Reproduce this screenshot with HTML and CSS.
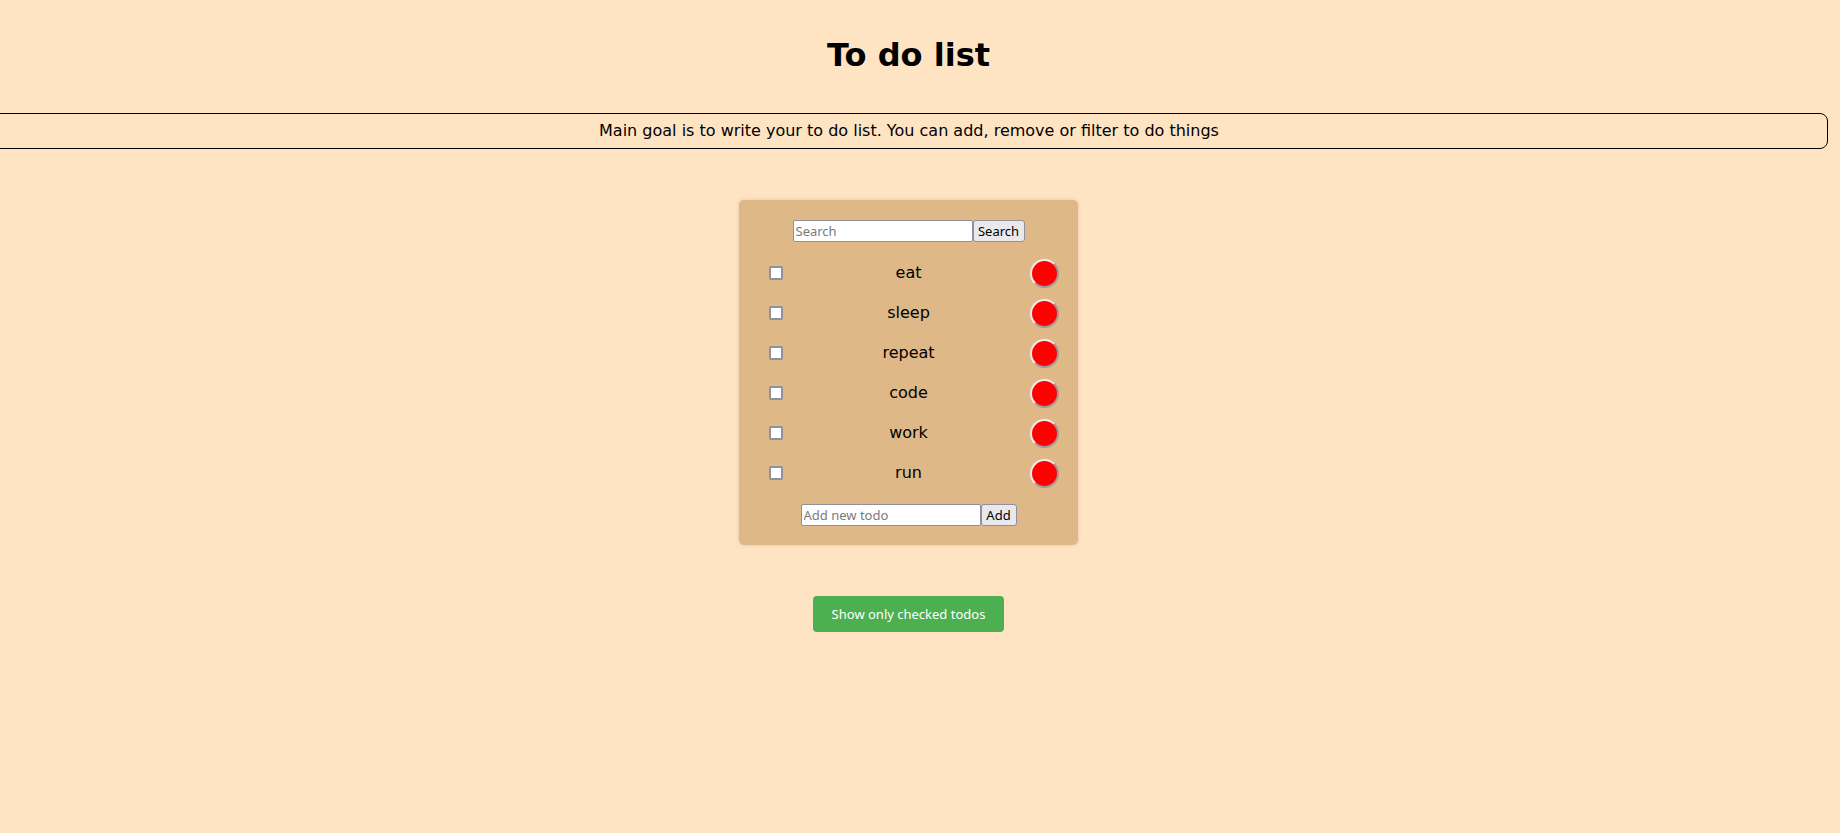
FILE: index.html
```html
<!DOCTYPE html>
<html lang="en">
<head>
<meta charset="utf-8">
<title>To do list</title>
<link rel="stylesheet" href="styles.css">
</head>
<body>
<div class="page">
  <h1 class="title">To do list</h1>
  <p class="intro">Main goal is to write your to do list. You can add, remove or filter to do things</p>
  <div class="card">
    <div class="form-row">
      <input class="field" type="text" placeholder="Search"><button class="small-btn search-btn">Search</button>
    </div>
    <ul class="todo-list">
      <li class="todo"><input class="check" type="checkbox"><span class="todo-text">eat</span><button class="remove" aria-label="remove"></button></li>
      <li class="todo"><input class="check" type="checkbox"><span class="todo-text">sleep</span><button class="remove" aria-label="remove"></button></li>
      <li class="todo"><input class="check" type="checkbox"><span class="todo-text">repeat</span><button class="remove" aria-label="remove"></button></li>
      <li class="todo"><input class="check" type="checkbox"><span class="todo-text">code</span><button class="remove" aria-label="remove"></button></li>
      <li class="todo"><input class="check" type="checkbox"><span class="todo-text">work</span><button class="remove" aria-label="remove"></button></li>
      <li class="todo"><input class="check" type="checkbox"><span class="todo-text">run</span><button class="remove" aria-label="remove"></button></li>
    </ul>
    <div class="form-row add-row">
      <input class="field" type="text" placeholder="Add new todo"><button class="small-btn add-btn">Add</button>
    </div>
  </div>
  <div class="filter-wrap">
    <button class="filter-btn">Show only checked todos</button>
  </div>
</div>
</body>
</html>
```
FILE: styles.css
```css
html, body {
  margin: 0;
  padding: 0;
  background: #ffe4c4;
}
body {
  font-family: "DejaVu Sans", sans-serif;
  font-size: 16px;
  color: #000;
}
.page {
  width: 1817px;
  display: flex;
  flex-direction: column;
  align-items: center;
}
.title {
  margin: 37px 0 0;
  font-size: 32px;
  line-height: 37px;
  font-weight: bold;
}
.intro {
  align-self: stretch;
  margin: 39px -11px 0 -10px;
  border: 1px solid #000;
  border-radius: 8px;
  padding: 7px 0;
  line-height: 20px;
  text-align: center;
}
.card {
  margin-top: 51px;
  width: 339px;
  box-sizing: border-box;
  padding: 20px 19px 19px;
  background: #deb887;
  border-radius: 5px;
  box-shadow: 0 0 4px rgba(0, 0, 0, 0.12);
}
.form-row {
  display: flex;
  justify-content: center;
  height: 22px;
}
.add-row {
  margin-top: 11px;
}
.field {
  width: 180px;
  height: 22px;
  box-sizing: border-box;
  margin: 0;
  padding: 1px 2px;
  font-family: "Noto Sans", "Open Sans", sans-serif;
  font-size: 13px;
  border: 1px solid #8f8f9d;
  border-radius: 2px;
  background: #fff;
}
.field::placeholder {
  color: #7a7a7a;
}
.small-btn {
  height: 22px;
  box-sizing: border-box;
  margin: 0;
  padding: 0;
  font-family: "Noto Sans", "Open Sans", sans-serif;
  font-size: 13px;
  color: #000;
  background: #e9e9ed;
  border: 1px solid #8f8f9d;
  border-radius: 3px;
}
.search-btn {
  width: 52px;
}
.add-btn {
  width: 36px;
}
.todo-list {
  list-style: none;
  margin: 11px 0 0;
  padding: 0;
}
.todo {
  height: 40px;
  display: grid;
  grid-template-columns: 1fr auto 1fr;
  align-items: center;
}
.check {
  justify-self: start;
  appearance: none;
  -webkit-appearance: none;
  width: 14px;
  height: 14px;
  box-sizing: border-box;
  margin: 0 0 0 11px;
  border: 2px solid #8f8f9d;
  border-radius: 2px;
  background: #fff;
}
.todo-text {
  line-height: 20px;
}
.remove {
  justify-self: end;
  width: 29px;
  height: 29px;
  box-sizing: border-box;
  margin: 0;
  padding: 0;
  background: #ff0000;
  border-radius: 50%;
  border: 2px solid;
  border-color: #ececec #9a9a9a #9a9a9a #ececec;
}
.filter-wrap {
  margin-top: 51px;
}
.filter-btn {
  width: 191px;
  height: 36px;
  margin: 0;
  padding: 0;
  border: none;
  border-radius: 4px;
  background: #4caf50;
  color: #fff;
  font-family: "Noto Sans", "Open Sans", sans-serif;
  font-size: 13px;
}
```
